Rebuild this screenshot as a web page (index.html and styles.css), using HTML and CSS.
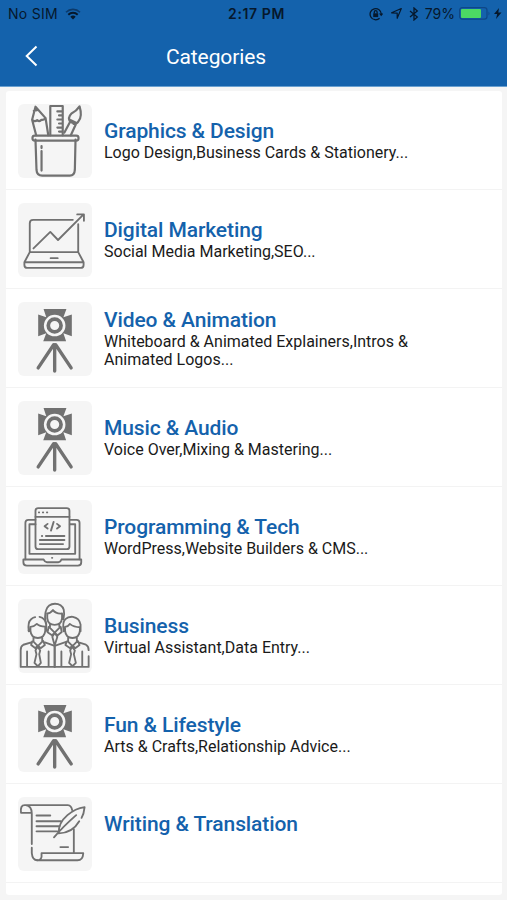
FILE: index.html
```html
<!DOCTYPE html>
<html lang="en">
<head>
  <meta charset="UTF-8" />
  <meta name="viewport" content="width=device-width, initial-scale=1.0" />
  <title>Categories</title>
  <link rel="stylesheet" href="styles.css">
</head>
<body>
  <!-- Shared light stand icon -->
  <svg class="defs" width="0" height="0">
    <symbol id="spotlight" viewBox="26 21 220 220">
      <path fill="#717171" stroke="none" d="M102 42h68l-9 24 25-8v65l-25-9 8 24h-68l9-24-24 9v-65l24 8z"/>
      <circle cx="135" cy="91" r="32" fill="#f5f5f5" stroke="none"/>
      <circle cx="135" cy="91" r="19" fill="none" stroke="#717171" stroke-width="11"/>
      <path fill="none" stroke="#717171" stroke-width="10" stroke-linecap="round" d="M135 148v78M132 148l-46 69M138 148l46 69"/>
    </symbol>
  </svg>

  <header class="header">
    <div class="status-bar">
      <div class="status-left">
        <span>No SIM</span>
        <svg class="wifi" width="16" height="12" viewBox="0 0 16 12">
          <path d="M1 4.2a10 10 0 0 1 14 0" fill="none" stroke="#0c3a6b" stroke-width="1.6"/>
          <path d="M3.3 6.7a6.7 6.7 0 0 1 9.4 0" fill="none" stroke="#06182c" stroke-width="1.9"/>
          <path d="M8 11.5 5.3 8.7a3.9 3.9 0 0 1 5.4 0z" fill="#06182c"/>
        </svg>
      </div>
      <div class="status-time">2:17 PM</div>
      <div class="status-right">
        <svg class="lock" width="14" height="14" viewBox="0 0 14 14" fill="none" stroke="#06182c" stroke-width="1.3">
          <path d="M10.6 11.2A5.6 5.6 0 1 1 12.3 7"/>
          <path d="M10 6.5h4.4L12.2 9.3z" fill="#06182c" stroke="none"/>
          <path d="M4.2 6.3h5v3.8h-5z" fill="#06182c" stroke="none"/>
          <path d="M5.3 6.5V5a1.4 1.4 0 0 1 2.8 0v1.5"/>
        </svg>
        <svg class="location" width="13" height="13" viewBox="0 0 13 13">
          <path d="M11.3 1.5 7.2 11.3V6.2L1.6 5.8z" fill="none" stroke="#06182c" stroke-width="1.2" stroke-linejoin="round"/>
        </svg>
        <svg class="bluetooth" width="10" height="14" viewBox="0 0 10 14">
          <path d="M1 4 8.3 10 5 13V1l3.3 3L1 10" fill="none" stroke="#06182c" stroke-width="1.3"/>
        </svg>
        <span class="percent">79%</span>
        <svg width="33" height="13" viewBox="0 0 33 13">
          <rect x=".6" y=".6" width="27.4" height="11.6" rx="2.6" fill="none" stroke="#0e4787" stroke-width="1.2"/>
          <rect x="2" y="2" width="20" height="9" rx="1" fill="#4cd964"/>
          <path d="M29.5 4.5q2 2 0 4z" fill="#0e4787"/>
        </svg>
        <svg class="bolt" width="8" height="11" viewBox="0 0 8 11">
          <path d="M5 0 0 6h3.2L2 11l5.5-6.5H4.3z" fill="#06182c"/>
        </svg>
      </div>
    </div>
    <div class="nav-bar">
      <svg class="back" width="14" height="22" viewBox="0 0 14 22">
        <path d="M11.5 1.5 1.7 11l9.8 9.5" fill="none" stroke="#fff" stroke-width="2"/>
      </svg>
      <h1>Categories</h1>
    </div>
  </header>

  <main class="list">
    <div class="row">
      <div class="tile">
        <svg viewBox="26 27 220 220">
          <path d="M78 133l3 90q1 17 17 17h82q14 0 15-17l2-90"/>
          <rect x="69" y="121" width="137" height="15" rx="7"/>
          <path d="M96 167v58M96 152v6"/>
          <path d="M80 120 68 74l10-39 30 34 8 51M68 74q8 7 15 1 7 6 13-1 5 2 12-5M73 47l10-2"/>
          <path d="M122 120V33h37v87M143 49h15M148 61h10M143 73h15M148 85h10M143 97h15M148 109h10"/>
          <path d="M164 112l17-32 17 7-15 33M181 80q-8-13 4-25 15-7 24-21 9 29-3 44-4 9-15 8M183 75l14 7"/>
        </svg>
      </div>
      <div class="info">
        <h2>Graphics &amp; Design</h2>
        <p>Logo Design,Business Cards &amp; Stationery...</p>
      </div>
    </div>

    <div class="row">
      <div class="tile">
        <svg class="thin" viewBox="26 24 220 220">
          <path d="M189 74H71q-10 0-10 10v86h144V87"/>
          <path d="M72 159l50-49 23 24 76-76M202 58h20v19"/>
          <path d="M61 170l-16 30v8q0 9 9 9h158q9 0 9-9v-8l-16-30M45 200h176M123 188h21"/>
        </svg>
      </div>
      <div class="info">
        <h2>Digital Marketing</h2>
        <p>Social Media Marketing,SEO...</p>
      </div>
    </div>

    <div class="row">
      <div class="tile">
        <svg><use href="#spotlight"/></svg>
      </div>
      <div class="info">
        <h2>Video &amp; Animation</h2>
        <p>Whiteboard &amp; Animated Explainers,Intros &amp; Animated Logos...</p>
      </div>
    </div>

    <div class="row">
      <div class="tile">
        <svg><use href="#spotlight"/></svg>
      </div>
      <div class="info">
        <h2>Music &amp; Audio</h2>
        <p>Voice Over,Mixing &amp; Mastering...</p>
      </div>
    </div>

    <div class="row">
      <div class="tile">
        <svg class="thin" viewBox="26 23 220 220">
          <path d="M78 82H57q-9 0-9 9v108M180 82h20q9 0 9 9v108M78 95H60v88h136V95h-16"/>
          <rect x="78" y="47" width="101" height="122" rx="8"/>
          <path d="M78 73h101M88 60h1M100 60h1M112 60h1"/>
          <path d="M114 94l-9 7 9 7M142 94l9 7-9 7M132 88l-8 26"/>
          <path d="M97 130h1M109 130h55M91 142h73M91 154h69M127 195h1"/>
          <path d="M42 200h60q4 8 10 8h34q6 0 9-8h59v8q0 10-10 10H52q-10 0-10-10z"/>
        </svg>
      </div>
      <div class="info">
        <h2>Programming &amp; Tech</h2>
        <p>WordPress,Website Builders &amp; CMS...</p>
      </div>
    </div>

    <div class="row">
      <div class="tile">
        <svg class="thin" viewBox="26 20 220 220">
          <path d="M109 94q-5-23 0-39 6-21 27-21 20 0 26 18 3 13-1 28M113 63v14q2 20 22 20t22-20V63q-18 2-27-10-8 10-17 10M121 95v11l14 14 14-14V95M117 103l-3 16 13 9 8-8 9 8 12-10-3-15M135 121l-7 11 7 26 8-26zM135 158v64"/>
          <path d="M58 116q-4-27 7-36 6-5 12-6M90 73q17 4 20 21v20M63 103v12q2 21 22 21t22-21v-13q-17 0-25-8-8 8-19 9M62 116l-5-3M108 116l5-3"/>
          <path d="M72 136v11l13 13 13-13v-11M68 146l-3 11 12 9 8-7 9 7 12-9-5-12M84 161l-6 12 3 11-6 26 10 10 9-10-5-26 3-11zM68 148l-26 8q-8 4-8 16v50h101M53 176v46M117 176v46M106 149l29 10"/>
          <path d="M162 116q-5-27 5-36 8-8 22-7 20 4 23 23v20M166 103v12q2 21 22 21t22-21v-11q-18 0-30-10-5 8-14 9M175 136v11l13 13 13-13v-11M171 146l-4 11 13 9 8-7 9 7 12-9-5-12M187 161l-6 12 3 11-6 26 10 10 10-10-6-26 3-11zM167 148l-32 11v63h101v-32M204 148l24 8q8 4 8 16M155 176v46M217 176v46"/>
        </svg>
      </div>
      <div class="info">
        <h2>Business</h2>
        <p>Virtual Assistant,Data Entry...</p>
      </div>
    </div>

    <div class="row">
      <div class="tile">
        <svg><use href="#spotlight"/></svg>
      </div>
      <div class="info">
        <h2>Fun &amp; Lifestyle</h2>
        <p>Arts &amp; Crafts,Relationship Advice...</p>
      </div>
    </div>

    <div class="row">
      <div class="tile">
        <svg class="thin" viewBox="26 20 220 220">
          <path d="M66 67H35q-3-23 11-23h128q11 1 13 15M49 44q18 2 18 25v91M67 171v16q2 21 16 21M192 116v71"/>
          <path d="M83 208h120q16 0 17-21H96v11q-2 10-13 10M81 75h41M81 92h73M81 107h68M81 122h62M152 169h23"/>
          <path d="M133 140q27-32 66-66M147 128q-2-30 26-54 23-20 51-24-2 20-9 32M208 92q-20 35-61 36"/>
        </svg>
      </div>
      <div class="info">
        <h2>Writing &amp; Translation</h2>
        <p></p>
      </div>
    </div>
  </main>
</body>
</html>
```
FILE: styles.css
```css
* {
  box-sizing: border-box;
}

body {
  margin: 0;
  height: 900px;
  background: #f5f5f5;
  font-family: Roboto, sans-serif;
  overflow: hidden;
}

.defs {
  position: absolute;
}

/* Header */
.header {
  height: 87px;
  background: #1462ac;
  border-bottom: 1px solid #69a0d0;
}

.status-bar {
  display: grid;
  grid-template-columns: 1fr auto 1fr;
  align-items: center;
  height: 27px;
  padding: 0 5px 0 8px;
  color: #06182c;
  font-family: Inter, sans-serif;
  font-size: 14px;
}

.status-left,
.status-right {
  display: flex;
  align-items: center;
}

.status-left {
  letter-spacing: 0.3px;
}

.status-right {
  justify-content: flex-end;
}

.wifi {
  margin-left: 7px;
}

.status-time {
  padding-left: 3px;
  font-weight: 600;
  letter-spacing: 0.6px;
}

.location {
  margin-left: 7px;
}

.bluetooth {
  margin-left: 6px;
}

.percent {
  margin: 0 4px 0 6px;
}

.bolt {
  margin-left: 2px;
}

.nav-bar {
  display: grid;
  grid-template-columns: 60px 1fr 60px;
  align-items: center;
  height: 59px;
}

.back {
  margin-left: 25px;
  margin-bottom: 2px;
}

h1 {
  margin: 0;
  padding-right: 75px;
  color: #fff;
  font-size: 21px;
  font-weight: 400;
  letter-spacing: -0.1px;
  text-align: center;
}

/* Category list */
.list {
  height: 804px;
  margin: 4px 5px 0 6px;
  background: #fff;
  border-radius: 3px;
}

.row {
  display: flex;
  align-items: center;
  height: 99px;
  padding: 0 12px;
  border-bottom: 1px solid #f3f3f3;
}

.tile {
  flex: none;
  width: 74px;
  height: 74px;
  margin-top: 1px;
  background: #f5f5f5;
  border-radius: 6px;
}

.tile svg {
  display: block;
  width: 74px;
  height: 74px;
  fill: none;
  stroke: #717171;
  stroke-width: 6.5;
  stroke-linecap: round;
  stroke-linejoin: round;
}

.tile .thin {
  stroke-width: 5.5;
}

.info {
  margin-left: 12px;
  padding-top: 2px;
  width: 325px;
}

h2 {
  margin: 0 0 2px;
  color: #1462ac;
  font-size: 21px;
  font-weight: 500;
  line-height: 22px;
  letter-spacing: -0.1px;
}

p {
  margin: 0;
  min-height: 18px;
  color: #1a1a1a;
  font-size: 16px;
  line-height: 18px;
}
```
